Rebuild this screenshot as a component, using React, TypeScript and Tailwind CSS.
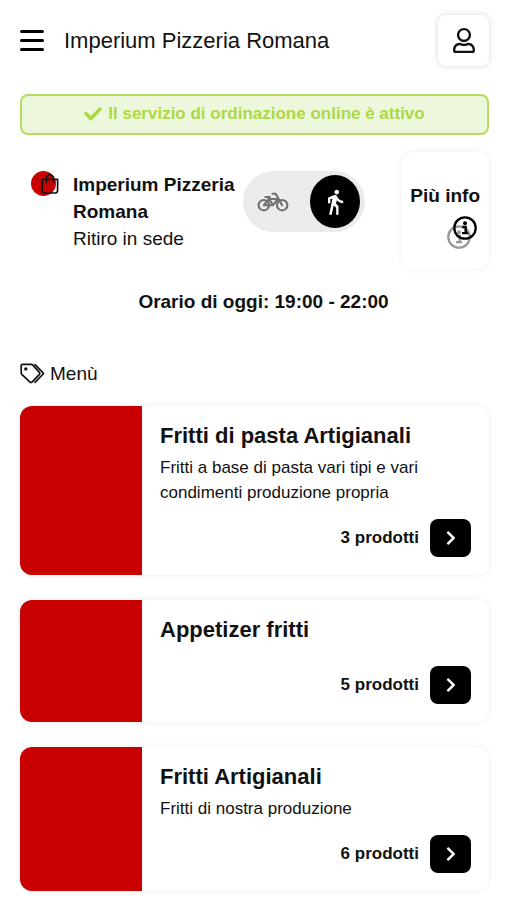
import { useState } from "react"
import { FaCheck, FaChevronRight, FaRegUser } from "react-icons/fa"
import { MdDirectionsWalk } from "react-icons/md"

const categories = [
  {
    title: "Fritti di pasta Artigianali",
    description: "Fritti a base di pasta vari tipi e vari condimenti produzione propria",
    count: 3,
  },
  { title: "Appetizer fritti", description: "", count: 5 },
  { title: "Fritti Artigianali", description: "Fritti di nostra produzione", count: 6 },
]

function BagIcon() {
  return (
    <svg
      viewBox="0 0 18 20"
      className="w-[18px] h-5"
      fill="none"
      stroke="currentColor"
      strokeWidth="1.7"
      strokeLinecap="round"
      strokeLinejoin="round"
    >
      <path d="M1.2 5.3h15.4v11.3a2.4 2.4 0 0 1-2.4 2.4H3a1.8 1.8 0 0 1-1.8-1.8z" />
      <path d="M5.2 8.3V4.6a3.7 3.7 0 0 1 7.4 0v3.7" />
    </svg>
  )
}

function InfoIcon({ className }: { className: string }) {
  return (
    <svg viewBox="0 0 24 24" className={className} fill="none" stroke="currentColor">
      <circle cx="12" cy="12" r="10.7" strokeWidth="2.3" />
      <circle cx="12" cy="7.2" r="2" fill="currentColor" stroke="none" />
      <path d="M9.2 11h3.5v6M9 17.1h6.2" strokeWidth="2.4" />
    </svg>
  )
}

function BikeIcon() {
  return (
    <svg
      viewBox="0 0 32 20"
      className="w-8 h-5"
      fill="none"
      stroke="currentColor"
      strokeWidth="2.1"
      strokeLinecap="round"
      strokeLinejoin="round"
    >
      <circle cx="6.8" cy="13.2" r="5.2" />
      <circle cx="25.2" cy="13.2" r="5.2" />
      <path d="M15.5 1.8h3.2l6.5 11.4" />
      <path d="M8.4 5h4.4" />
      <path d="M11 5.2l5 8H6.8L12 7h9l-5 6.2" />
    </svg>
  )
}

function TagsIcon() {
  return (
    <svg
      viewBox="0 0 25 21"
      className="w-[25px] h-[21px]"
      fill="none"
      stroke="currentColor"
      strokeWidth="1.7"
      strokeLinecap="round"
      strokeLinejoin="round"
    >
      <path d="M2.4 1.3h8.8a2 2 0 0 1 1.4.6l6.6 7.2a1.8 1.8 0 0 1 0 2.5l-7 7.2a1.8 1.8 0 0 1-2.5 0L1.8 11.4a2 2 0 0 1-.6-1.4V2.5a1.2 1.2 0 0 1 1.2-1.2z" />
      <path d="M15 1.6l8.2 8.3a.8.8 0 0 1 0 1.1L15 19.4" />
      <circle cx="5.8" cy="5.9" r="1.7" fill="currentColor" stroke="none" />
    </svg>
  )
}

function Header() {
  return (
    <header className="flex items-center justify-between pt-[15px]">
      <div className="flex items-center gap-5">
        <button aria-label="Apri menu" className="flex flex-col gap-[6px]">
          <span className="block w-6 h-[3px] rounded-full bg-black" />
          <span className="block w-6 h-[3px] rounded-full bg-black" />
          <span className="block w-6 h-[3px] rounded-full bg-black" />
        </button>
        <h1 className="text-[22px] leading-[30px]">Imperium Pizzeria Romana</h1>
      </div>
      <button
        aria-label="Profilo"
        className="flex items-center justify-center w-[51px] h-[51px] rounded-lg bg-white shadow-[0_0_6px_rgba(0,0,0,0.16)]"
      >
        <FaRegUser className="w-[22px] h-[25px]" />
      </button>
    </header>
  )
}

function DeliveryToggle() {
  const [mode, setMode] = useState("pickup")
  const base = "flex items-center justify-center w-[50px] h-[53px] rounded-[50%] cursor-pointer"
  const active = "bg-black text-white"
  const idle = "text-[#707070]"

  return (
    <fieldset className="flex items-center justify-between shrink-0 w-[122px] h-[61px] mt-[19px] px-[5px] rounded-full bg-[#ebebeb]">
      <label className={`${base} ${mode === "delivery" ? active : idle}`}>
        <input
          type="radio"
          name="mode"
          aria-label="Consegna a domicilio"
          className="sr-only"
          checked={mode === "delivery"}
          onChange={() => setMode("delivery")}
        />
        <BikeIcon />
      </label>
      <label className={`${base} ${mode === "pickup" ? active : idle}`}>
        <input
          type="radio"
          name="mode"
          aria-label="Ritiro in sede"
          className="sr-only"
          checked={mode === "pickup"}
          onChange={() => setMode("pickup")}
        />
        <MdDirectionsWalk className="w-7 h-7" />
      </label>
    </fieldset>
  )
}

function StoreInfo() {
  return (
    <section className="flex items-start mt-[17px]">
      {/* Store */}
      <div className="flex flex-1 pl-[11px] pt-[19px]">
        <div className="relative w-[25px] h-[25px] shrink-0 rounded-full bg-[#c80000]">
          <span className="absolute left-[10px] top-[3px]">
            <BagIcon />
          </span>
        </div>
        <div className="ml-[17px] text-[19px] leading-[27px]">
          <h2 className="font-bold">Imperium Pizzeria Romana</h2>
          <p>Ritiro in sede</p>
        </div>
      </div>

      <DeliveryToggle />

      {/* More info */}
      <button className="flex flex-col items-end shrink-0 w-[87px] h-[117px] ml-[37px] pt-[30px] pr-[9px] rounded-xl bg-white shadow-[0_0_6px_rgba(0,0,0,0.08)]">
        <span className="text-[19px] leading-[27px] font-bold whitespace-nowrap">Più info</span>
        <span className="relative w-[30px] h-[33px] mt-[7px] mr-[3px]">
          <InfoIcon className="absolute left-0 bottom-0 w-6 h-6 text-[#999]" />
          <InfoIcon className="absolute right-0 top-0 w-6 h-6 text-black" />
        </span>
      </button>
    </section>
  )
}

function CategoryCard({ title, description, count }: { title: string; description: string; count: number }) {
  return (
    <article className="flex min-h-[122px] rounded-xl overflow-hidden bg-white shadow-[0_0_6px_rgba(0,0,0,0.08)]">
      <div className="w-[122px] shrink-0 bg-[#c80000]" />
      <div className="flex flex-col flex-1 pt-[15px] pb-[18px] px-[18px]">
        <h3 className="text-[22px] leading-[30px] font-bold">{title}</h3>
        {description && <p className="mt-1 mb-[14px] text-[17px] leading-[25px]">{description}</p>}
        <div className="flex items-center justify-end gap-[11px] mt-auto">
          <span className="pb-[2px] text-[17px] leading-[25px] font-bold">{count} prodotti</span>
          <button
            aria-label={`Apri ${title}`}
            className="flex items-center justify-center w-[41px] h-[38px] rounded-lg bg-black text-white"
          >
            <FaChevronRight className="w-4 h-4" />
          </button>
        </div>
      </div>
    </article>
  )
}

export default function App() {
  return (
    <main className="min-h-screen pl-5 pr-[18px] pb-[9px] bg-white text-[#111] font-['Liberation_Sans',Arial,sans-serif]">
      <Header />

      <div className="flex items-center justify-center gap-[6px] h-[41px] mt-7 pb-[2px] rounded-lg border-2 border-[#b5db60] bg-[#edf7db] text-[#add845] text-[17px] font-bold">
        <FaCheck className="w-[18px] h-[18px]" />
        <span>Il servizio di ordinazione online è attivo</span>
      </div>

      <StoreInfo />

      <p className="mt-[19px] pl-[18px] text-center text-[19px] leading-[27px] font-bold">
        Orario di oggi: 19:00 - 22:00
      </p>

      <h2 className="flex items-center gap-[5px] mt-[45px] text-[19px] leading-[27px]">
        <TagsIcon />
        Menù
      </h2>

      <div className="flex flex-col gap-[25px] mt-[19px]">
        {categories.map((category) => (
          <CategoryCard key={category.title} {...category} />
        ))}
      </div>
    </main>
  )
}
